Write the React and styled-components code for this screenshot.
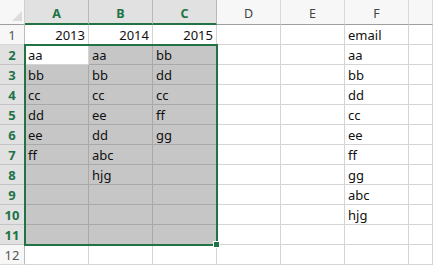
import React from "react";
import styled, { createGlobalStyle } from "styled-components";

const GlobalStyle = createGlobalStyle`
  body {
    margin: 0;
    background: #ffffff;
    overflow: hidden;
  }
`

const GREEN = "#217346";

const Sheet = styled.div`
  position: relative;
  display: grid;
  grid-template-columns: 25px repeat(6, 64px) 1fr;
  grid-template-rows: 25px repeat(12, 20px);
  width: 433px;
  height: 266px;
  font-family: "Noto Sans", "Liberation Sans", sans-serif;
  overflow: hidden;
`
const Corner = styled.div`
  box-sizing: border-box;
  background: #f7f7f7;
  border-right: 1px solid #d0d0d0;
  border-bottom: 1px solid #9e9e9e;
  display: flex;
  align-items: flex-end;
  justify-content: flex-end;
  padding: 0 2px 3px 0;
`
const ColHeader = styled.div`
  box-sizing: border-box;
  background: ${props => (props.selected ? "#e1e1e1" : "#f7f7f7")};
  border-right: 1px solid ${props => (props.selected ? "#b8b8b8" : "#d9d9d9")};
  border-bottom: ${props => (props.selected ? `2px solid ${GREEN}` : "1px solid #9e9e9e")};
  color: ${props => (props.selected ? GREEN : "#444444")};
  font-weight: ${props => (props.selected ? 700 : 400)};
  font-size: 12.5px;
  line-height: 20px;
  padding-top: 4px;
  text-align: center;
`
const RowHeader = styled.div`
  box-sizing: border-box;
  background: ${props => (props.selected ? "#e1e1e1" : "#f7f7f7")};
  border-right: 1px solid ${props => (props.selected ? GREEN : "#bcbcbc")};
  border-bottom: 1px solid ${props => (props.selected ? "#c4c4c4" : "#d9d9d9")};
  color: ${props => (props.selected ? GREEN : "#555555")};
  font-weight: ${props => (props.selected ? 700 : 400)};
  font-size: 13px;
  line-height: 20px;
  text-align: center;
`
const Cell = styled.div`
  box-sizing: border-box;
  background: ${props => (props.selected ? "#c6c6c6" : "#ffffff")};
  border-right: 1px solid ${props => (props.selected ? "#a9a9a9" : "#d4d4d4")};
  border-bottom: 1px solid ${props => (props.selected ? "#a9a9a9" : "#d4d4d4")};
  color: #111111;
  font-size: 13px;
  line-height: 20px;
  padding: 0 3px 0 3px;
  text-align: ${props => (props.number ? "right" : "left")};
  white-space: nowrap;
  overflow: hidden;
`
const Selection = styled.div`
  position: absolute;
  left: 24px;
  top: 44px;
  width: 194px;
  height: 202px;
  box-sizing: border-box;
  border: 2px solid ${GREEN};
  pointer-events: none;
`
const FillHandle = styled.div`
  position: absolute;
  right: -4px;
  bottom: -4px;
  width: 7px;
  height: 7px;
  box-sizing: border-box;
  background: ${GREEN};
  border: 1px solid #ffffff;
`

const columns = ["A", "B", "C", "D", "E", "F", ""];

const rows = [
  ["2013", "2014", "2015", "", "", "email", ""],
  ["aa", "aa", "bb", "", "", "aa", ""],
  ["bb", "bb", "dd", "", "", "bb", ""],
  ["cc", "cc", "cc", "", "", "dd", ""],
  ["dd", "ee", "ff", "", "", "cc", ""],
  ["ee", "dd", "gg", "", "", "ee", ""],
  ["ff", "abc", "", "", "", "ff", ""],
  ["", "hjg", "", "", "", "gg", ""],
  ["", "", "", "", "", "abc", ""],
  ["", "", "", "", "", "hjg", ""],
  ["", "", "", "", "", "", ""],
  ["", "", "", "", "", "", ""]
];

// rows 2-11, columns A-C are selected; A2 is the active cell
const isSelected = (r, c) => r >= 1 && r <= 10 && c <= 2 && !(r === 1 && c === 0);

const App = () => {
  return (
    <>
      <GlobalStyle />
      <Sheet>
        <Corner>
          <svg width="10" height="10" viewBox="0 0 10 10">
            <polygon points="10,0 10,10 0,10" fill="#dcdcdc" />
          </svg>
        </Corner>
        {columns.map((name, c) => (
          <ColHeader key={c} selected={c <= 2}>{name}</ColHeader>
        ))}
        {rows.map((row, r) => (
          <React.Fragment key={r}>
            <RowHeader selected={r >= 1 && r <= 10}>{r + 1}</RowHeader>
            {row.map((value, c) => (
              <Cell
                key={c}
                selected={isSelected(r, c)}
                number={/^\d+$/.test(value)}
              >
                {value}
              </Cell>
            ))}
          </React.Fragment>
        ))}
        <Selection>
          <FillHandle />
        </Selection>
      </Sheet>
    </>
  );
};

export default App;
